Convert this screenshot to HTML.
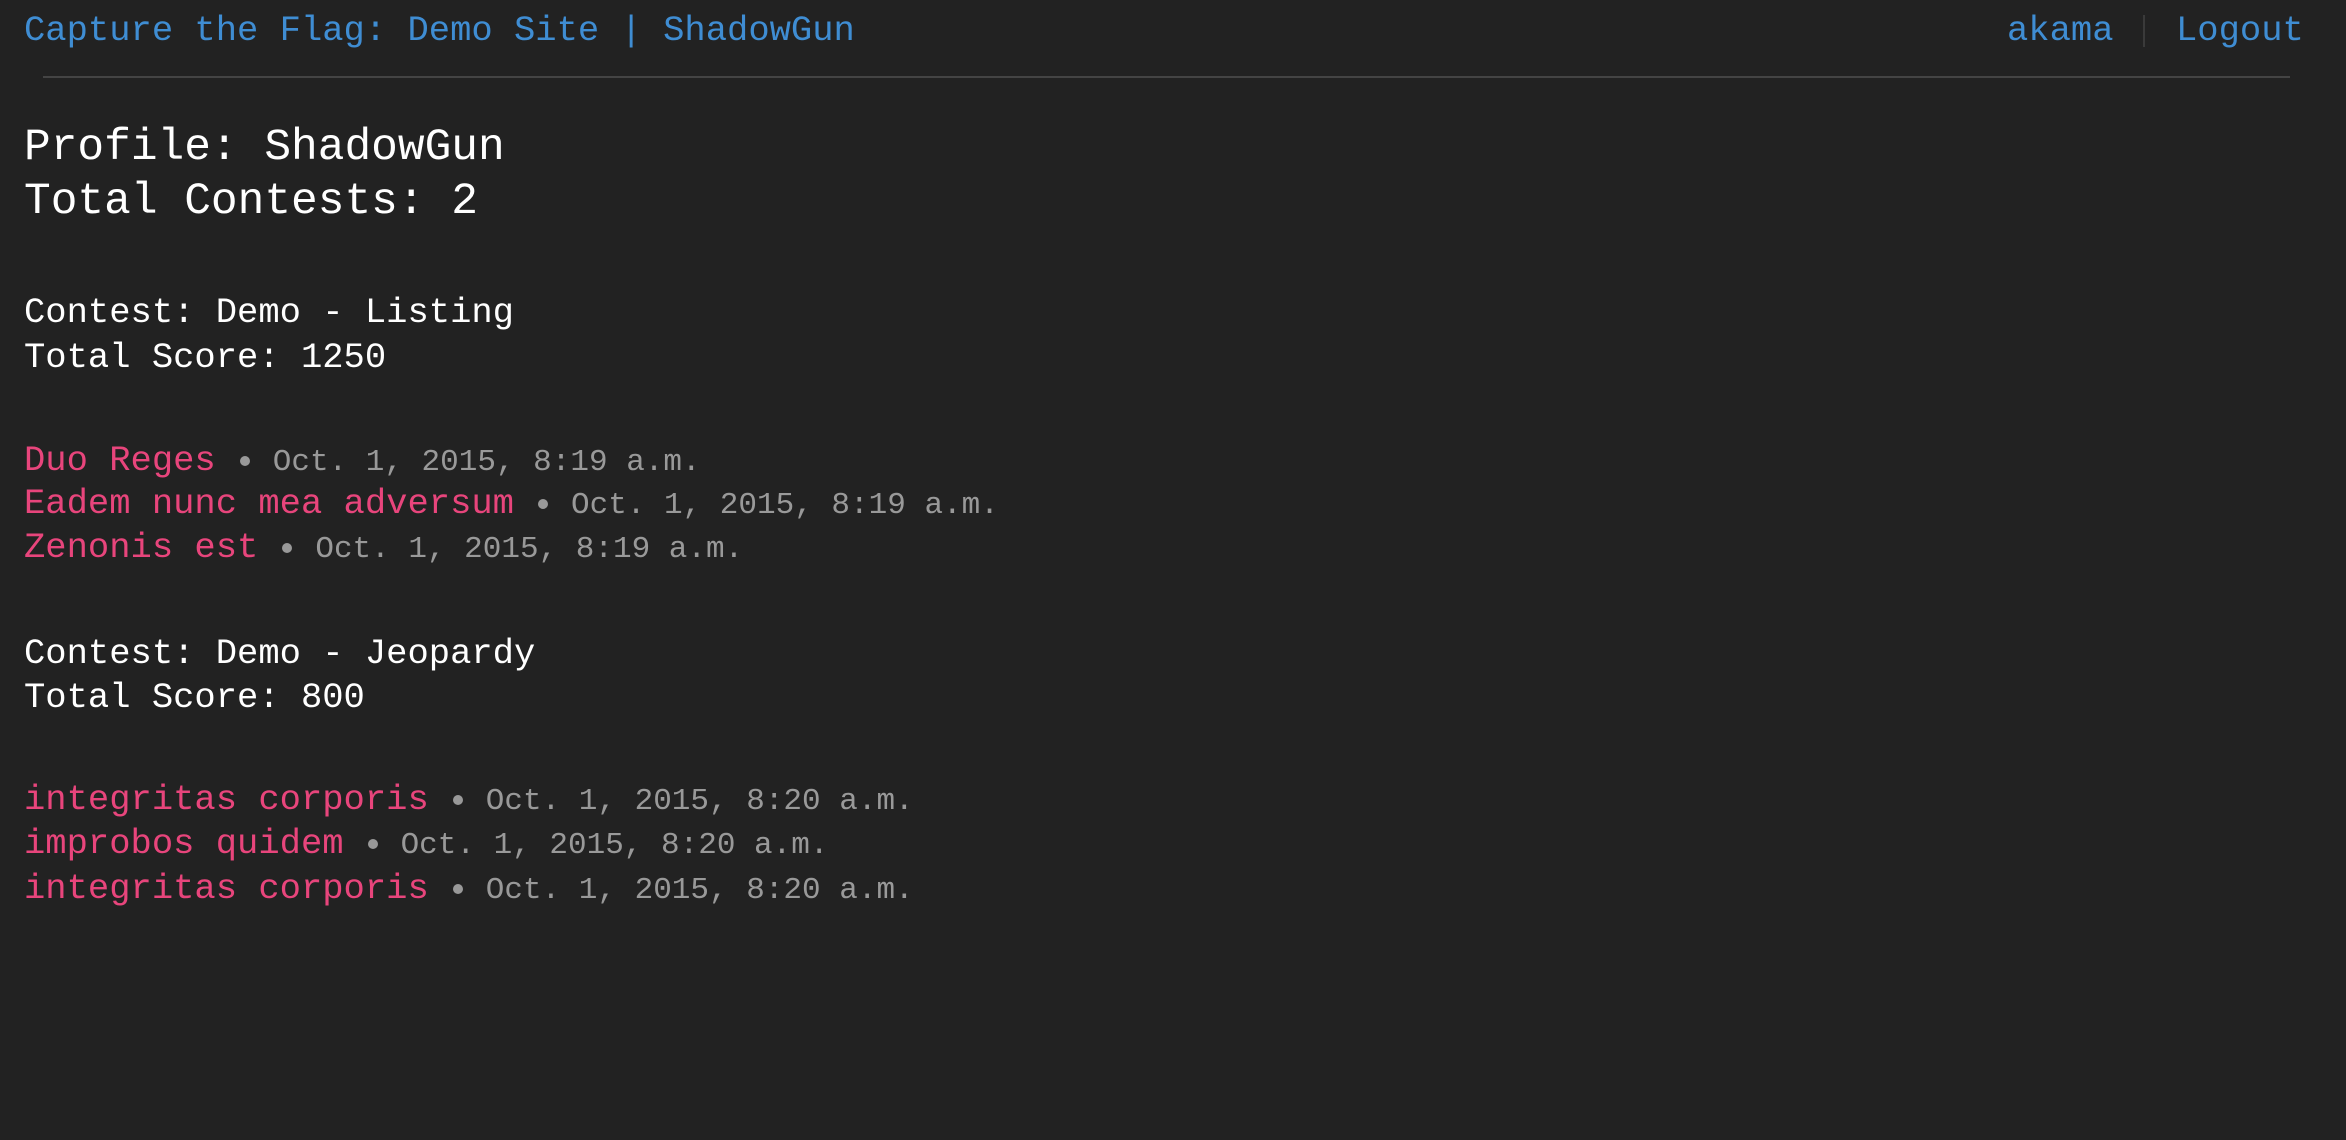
<!DOCTYPE html>
<html><head><meta charset="utf-8"><style>
html,body{margin:0;padding:0;background:#222;width:2346px;height:1140px;overflow:hidden}
body{font-family:"Liberation Mono",monospace;position:relative}
.l{position:absolute;left:24px;white-space:pre;margin:0}
.b{color:#3f8dd3}
.w{color:#fff}
.p{color:#e8457c;font-size:35.5px}
.g{color:#999;font-size:31px}
.h{font-size:35.5px;line-height:44px}
.t{font-size:44.5px;line-height:54px}
.c{font-size:35.5px;line-height:45px}
.i{line-height:44px}
.d{display:inline-block;width:10px;height:10px;border-radius:50%;background:#999;margin:0 23px 0 24px;vertical-align:middle;position:relative;top:-5px}
</style></head><body>
<div class="l b h" style="top:9px">Capture the Flag: Demo Site | ShadowGun</div>
<div class="l b h" style="left:2007px;top:9px">akama</div>
<div style="position:absolute;left:2143px;top:15px;width:2px;height:32px;background:#3a3a3a"></div>
<div class="l b h" style="left:2176px;top:9px">Logout</div>
<div style="position:absolute;left:43px;top:76px;width:2247px;height:2px;background:#444"></div>

<div class="l w t" style="top:121px">Profile: ShadowGun</div>
<div class="l w t" style="top:175px">Total Contests: 2</div>

<div class="l w c" style="top:290px">Contest: Demo - Listing</div>
<div class="l w c" style="top:335px">Total Score: 1250</div>

<div class="l i" style="top:439px"><span class="p">Duo Reges</span><span class="d"></span><span class="g">Oct. 1, 2015, 8:19 a.m.</span></div>
<div class="l i" style="top:482px"><span class="p">Eadem nunc mea adversum</span><span class="d"></span><span class="g">Oct. 1, 2015, 8:19 a.m.</span></div>
<div class="l i" style="top:526px"><span class="p">Zenonis est</span><span class="d"></span><span class="g">Oct. 1, 2015, 8:19 a.m.</span></div>

<div class="l w c" style="top:631px">Contest: Demo - Jeopardy</div>
<div class="l w c" style="top:675px">Total Score: 800</div>

<div class="l i" style="top:778px"><span class="p">integritas corporis</span><span class="d"></span><span class="g">Oct. 1, 2015, 8:20 a.m.</span></div>
<div class="l i" style="top:822px"><span class="p">improbos quidem</span><span class="d"></span><span class="g">Oct. 1, 2015, 8:20 a.m.</span></div>
<div class="l i" style="top:867px"><span class="p">integritas corporis</span><span class="d"></span><span class="g">Oct. 1, 2015, 8:20 a.m.</span></div>
</body></html>
